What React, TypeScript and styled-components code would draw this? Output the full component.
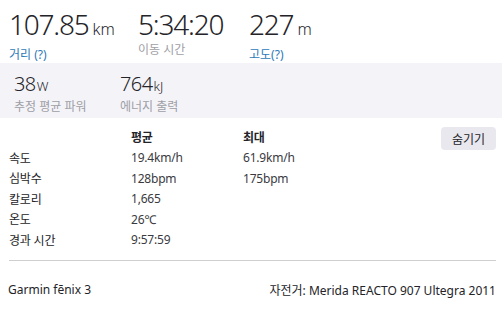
import React from 'react';
import styled, { createGlobalStyle } from 'styled-components';

const GlobalStyle = createGlobalStyle`
  html, body {
    margin: 0;
    padding: 0;
    background: #fff;
  }
  body {
    font-family: "Noto Sans", "Noto Sans CJK KR", sans-serif;
    color: #242428;
  }
`;

const topStats = [
  { value: '107.85', unit: 'km', label: '거리', help: ' (?)', link: true, width: '129px' },
  { value: '5:34:20', unit: '', label: '이동 시간', help: '', link: false, width: '111px' },
  { value: '227', unit: 'm', label: '고도', help: '(?)', link: true, width: 'auto' },
];

const secondaryStats = [
  { value: '38', unit: 'W', label: '추정 평균 파워' },
  { value: '764', unit: 'kJ', label: '에너지 출력' },
];

const rows = [
  { label: '속도', avg: '19.4km/h', max: '61.9km/h' },
  { label: '심박수', avg: '128bpm', max: '175bpm' },
  { label: '칼로리', avg: '1,665', max: '' },
  { label: '온도', avg: '26℃', max: '' },
  { label: '경과 시간', avg: '9:57:59', max: '' },
];

export default function App() {
  return (
    <>
      <GlobalStyle />
      <Page>
        <TopRow>
          {topStats.map((s) => (
            <Stat key={s.label} $width={s.width}>
              <BigValue>
                {s.value}
                {s.unit && <Unit>{s.unit}</Unit>}
              </BigValue>
              <StatLabel $link={s.link}>
                {s.label}
                {s.help}
              </StatLabel>
            </Stat>
          ))}
        </TopRow>

        <SecondaryBand>
          {secondaryStats.map((s) => (
            <SmallStat key={s.label}>
              <MidValue>
                {s.value}
                <SmallUnit>{s.unit}</SmallUnit>
              </MidValue>
              <SmallLabel>{s.label}</SmallLabel>
            </SmallStat>
          ))}
        </SecondaryBand>

        <TableArea>
          <StatsTable>
            <thead>
              <tr>
                <HeadCell />
                <HeadCell>평균</HeadCell>
                <HeadCell>최대</HeadCell>
              </tr>
            </thead>
            <tbody>
              {rows.map((r) => (
                <tr key={r.label}>
                  <LabelCell>{r.label}</LabelCell>
                  <ValueCell>{r.avg}</ValueCell>
                  <ValueCell>{r.max}</ValueCell>
                </tr>
              ))}
            </tbody>
          </StatsTable>
          <HideButton>숨기기</HideButton>
        </TableArea>

        <Divider />

        <Footer>
          <span>Garmin fēnix 3</span>
          <span>자전거: Merida REACTO 907 Ultegra 2011</span>
        </Footer>
      </Page>
    </>
  );
}

const Page = styled.div`
  width: 502px;
  height: 316px;
  overflow: hidden;
`;

const TopRow = styled.div`
  display: flex;
  padding: 9px 9px 0;
  height: 55px;
  box-sizing: border-box;
`;

const Stat = styled.div<{ $width: string }>`
  width: ${({ $width }) => $width};
  display: flex;
  flex-direction: column;
`;

const BigValue = styled.div`
  font-size: 28px;
  font-weight: 300;
  line-height: 30px;
  letter-spacing: -1.2px;
  color: #242428;
  white-space: nowrap;
`;

const Unit = styled.span`
  font-size: 16px;
  margin-left: 4px;
  letter-spacing: 0;
`;

const StatLabel = styled.div<{ $link: boolean }>`
  font-size: 12px;
  line-height: 15px;
  margin-top: 3px;
  color: ${({ $link }) => ($link ? '#2d7ab8' : '#a0a0a6')};
`;

const SecondaryBand = styled.div`
  display: flex;
  background: #f4f4f8;
  height: 55px;
  margin-top: 8px;
  padding: 10px 14px 0;
  box-sizing: border-box;
`;

const SmallStat = styled.div`
  width: 106px;
  display: flex;
  flex-direction: column;
`;

const MidValue = styled.div`
  font-size: 20px;
  font-weight: 300;
  line-height: 22px;
  letter-spacing: -0.6px;
  color: #242428;
  white-space: nowrap;
`;

const SmallUnit = styled.span`
  font-size: 13px;
  margin-left: 1px;
  letter-spacing: 0;
`;

const SmallLabel = styled.div`
  font-size: 12px;
  line-height: 16px;
  margin-top: 2px;
  color: #9e9ea6;
  white-space: nowrap;
`;

const TableArea = styled.div`
  display: flex;
  justify-content: space-between;
  align-items: flex-start;
  padding: 9px 6px 0 9px;
  height: 142px;
  box-sizing: border-box;
`;

const StatsTable = styled.table`
  border-collapse: collapse;
  font-size: 12px;
  letter-spacing: -0.2px;
  td, th {
    padding: 0;
    height: 20.5px;
  }
`;

const HeadCell = styled.th`
  text-align: left;
  font-weight: 700;
  color: #242428;
  &:first-child {
    width: 122px;
  }
  &:nth-child(2) {
    width: 112px;
  }
  height: 22px;
`;

const LabelCell = styled.td`
  color: #242428;
`;

const ValueCell = styled.td`
  color: #3a3a40;
`;

const HideButton = styled.button`
  font-family: inherit;
  font-size: 12px;
  color: #242428;
  background: #e8e8ee;
  border: none;
  border-radius: 4px;
  padding: 0 11px;
  height: 23px;
`;

const Divider = styled.div`
  height: 1px;
  background: #cfcfd2;
  margin: 0 6px 0 9px;
`;

const Footer = styled.div`
  display: flex;
  justify-content: space-between;
  padding: 20px 6px 0 8px;
  font-size: 12px;
  color: #242428;
`;
